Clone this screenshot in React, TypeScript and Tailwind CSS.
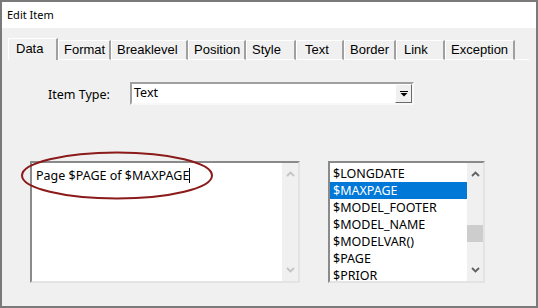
import React from 'react';

const tabs = [
  { label: 'Data', w: 'w-[50px]', pl: 'pl-[7px]' },
  { label: 'Format', w: 'w-[53px]', pl: 'pl-[5px]' },
  { label: 'Breaklevel', w: 'w-[77px]', pl: 'pl-[5px]' },
  { label: 'Position', w: 'w-[58px]', pl: 'pl-[5px]' },
  { label: 'Style', w: 'w-[50px]', pl: 'pl-[5px]' },
  { label: 'Text', w: 'w-[48px]', pl: 'pl-[8px]' },
  { label: 'Border', w: 'w-[52px]', pl: 'pl-[5px]' },
  { label: 'Link', w: 'w-[49px]', pl: 'pl-[7px]' },
  { label: 'Exception', w: 'w-[70px]', pl: 'pl-[5px]' },
];

const items = ['$LONGDATE', '$MAXPAGE', '$MODEL_FOOTER', '$MODEL_NAME', '$MODELVAR()', '$PAGE', '$PRIOR'];

const ui = "font-['Noto_Sans','Open_Sans',sans-serif]";
const classic = "font-['Liberation_Sans',Arial,sans-serif]";

function Chevron({ up, color }: { up?: boolean; color: string }) {
  return (
    <svg width="9" height="6" viewBox="0 0 9 6">
      <path d={up ? 'M1 5 L4.5 1.5 L8 5' : 'M1 1 L4.5 4.5 L8 1'} fill="none" stroke={color} strokeWidth="1.8" />
    </svg>
  );
}

export default function App() {
  return (
    <div className={`relative w-[538px] h-[308px] border-2 border-[#7a7a7a] bg-[#f0f0f0] flex flex-col text-black ${ui}`}>
      {/* Title bar */}
      <div className="h-[26px] bg-white flex items-center pl-[5px] text-[11px]">Edit Item</div>

      <div className="flex-1 flex flex-col pl-[6px] pr-[7px] pt-[10px]">
        {/* Tabs */}
        <div className={`flex items-end h-[22px] text-[13px] ${classic}`}>
          {tabs.map((t, i) =>
            i === 0 ? (
              <div
                key={t.label}
                className={`${t.w} ${t.pl} shrink-0 h-[22px] flex items-center border-l border-t border-white border-r-2 border-r-[#a0a0a0] bg-[#f0f0f0] pb-[1px]`}
              >
                {t.label}
              </div>
            ) : (
              <div
                key={t.label}
                className={`${t.w} ${t.pl} shrink-0 h-[20px] flex items-center border-l border-t border-white border-r-2 border-r-[#a0a0a0] border-b border-b-white`}
              >
                {t.label}
              </div>
            )
          )}
          <div className="flex-1 h-[1px] bg-white" />
        </div>

        {/* Panel */}
        <div className="flex-1 flex flex-col">
          <div className="mt-[22px] flex items-center h-[23px]">
            <div className="w-[122px] shrink-0 pl-[40px] pt-[3px] text-[12.5px] whitespace-nowrap">Item Type:</div>
            <div className="w-[284px] shrink-0 h-[23px] bg-white border-2 border-t-[#a0a0a0] border-l-[#a0a0a0] border-r-[#f8f8f8] border-b-[#f8f8f8] flex items-center">
              <span className="flex-1 pl-[2px] text-[12.5px]">Text</span>
              <div className="w-[17px] h-[19px] bg-[#f0f0f0] border border-t-white border-l-white border-r-[#6a6a6a] border-b-[#6a6a6a] flex items-center justify-center">
                <svg width="8" height="6" viewBox="0 0 8 6">
                  <rect x="0" y="0" width="8" height="1" fill="#000" />
                  <path d="M0.5 2 L7.5 2 L4 5.5 Z" fill="#000" />
                </svg>
              </div>
            </div>
          </div>

          <div className="mt-[56px] flex">
            {/* Text area */}
            <div className="ml-[22px] w-[270px] h-[122px] bg-white border-2 border-t-[#8a8a8a] border-l-[#8a8a8a] border-r-[#e3e3e3] border-b-[#e3e3e3] flex">
              <div className="flex-1 pl-[4px] pt-[4px] text-[12.5px] leading-[17px] flex items-start">
                <span>Page $PAGE of $MAXPAGE</span>
                <span className="w-[1px] h-[15px] bg-black mt-[1px]" />
              </div>
              <div className="w-[16px] bg-[#f0f0f0] flex flex-col items-center justify-between py-[8px]">
                <Chevron up color="#c4c4c4" />
                <Chevron color="#c4c4c4" />
              </div>
            </div>

            {/* List box */}
            <div className="ml-[28px] w-[157px] h-[122px] bg-white border-2 border-t-[#8a8a8a] border-l-[#8a8a8a] border-r-[#e3e3e3] border-b-[#e3e3e3] flex">
              <div className="flex-1 pt-[2px] text-[12.5px] leading-[17px]">
                {items.map((it) => (
                  <div key={it} className={`h-[17px] pl-[3px] whitespace-nowrap ${it === '$MAXPAGE' ? 'bg-[#0078d7] text-white' : ''}`}>
                    {it}
                  </div>
                ))}
              </div>
              <div className="w-[16px] bg-[#f0f0f0] flex flex-col items-center py-[8px]">
                <Chevron up color="#606060" />
                <div className="mt-[48px] w-[16px] h-[17px] bg-[#cdcdcd]" />
                <div className="mt-auto">
                  <Chevron color="#606060" />
                </div>
              </div>
            </div>
          </div>
        </div>
      </div>

      {/* Annotation ellipse */}
      <svg className="absolute left-[-2px] top-[-2px] pointer-events-none" width="538" height="308">
        <ellipse cx="117" cy="175.5" rx="95" ry="23" fill="none" stroke="#8b1a1a" strokeWidth="2" />
      </svg>
    </div>
  );
}
